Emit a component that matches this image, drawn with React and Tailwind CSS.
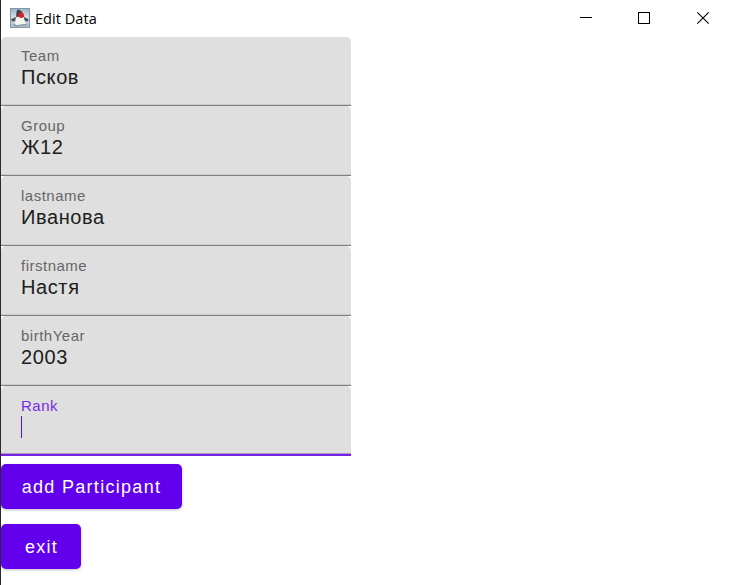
const fields = [
  { label: "Team", value: "Псков" },
  { label: "Group", value: "Ж12" },
  { label: "lastname", value: "Иванова" },
  { label: "firstname", value: "Настя" },
  { label: "birthYear", value: "2003" },
];

function DukeIcon() {
  return (
    <svg width="20" height="20" viewBox="0 0 20 20" className="block">
      <defs>
        <linearGradient id="sky" x1="0" y1="0" x2="0" y2="1">
          <stop offset="0" stopColor="#a3b4c4" />
          <stop offset="0.5" stopColor="#dbe3ea" />
          <stop offset="1" stopColor="#a9bccd" />
        </linearGradient>
      </defs>
      <rect width="20" height="20" fill="#8397aa" />
      <rect x="1" y="1" width="18" height="18" fill="url(#sky)" />
      <path d="M1 11 L6 9 L6 13 L2 13.500Z M14 9 L18.500 11 L18 13.500 L14 13Z" fill="#4d535c" />
      <path d="M8 2 C10 3 13 6 14 10 L15.500 16 L12 16.500 L8 17.500 L5 16 C5.500 12 6 6 8 2Z" fill="#f4f5f3" />
      <path d="M7.500 1.500 C10.500 2 13.500 4 14.200 9 L12 9.500 L8.500 8.500 L6.300 9.500 C6 6 6.500 3 7.500 1.500Z" fill="#3b4048" />
      <path d="M3 16.500 L7 18 L12 16.800 L17 17" stroke="#7b8791" fill="none" />
      <ellipse cx="11" cy="7.200" rx="2.600" ry="2.600" fill="#df1f1d" />
    </svg>
  );
}

function Field({ label, value, first }) {
  return (
    <div className={`${first ? "h-[69px] pt-[10px]" : "h-[70px] pt-[11px]"} w-[350px]`}>
      <div className="h-[18px] pl-5 text-[15px] leading-[18px] tracking-[0.5px] text-[#666]">{label}</div>
      <div className="h-6 pl-5 text-[20px] leading-6 tracking-[0.6px] text-[#202020]">{value}</div>
    </div>
  );
}

function FieldBox({ children }) {
  return (
    <div className="w-[350px] overflow-hidden border-b border-[#817f82]">
      <div className="-mb-px rounded-t-[5px] bg-[#dfdfdf] shadow-[inset_0_-2px_0_#c9c9c9]">{children}</div>
    </div>
  );
}

export default function App() {
  return (
    <div className="flex h-[585px] w-[732px] flex-col overflow-hidden border-l border-[#2b292c] bg-white font-['Liberation_Sans',sans-serif]">
      <header className="flex h-[37px] shrink-0 items-start text-black">
        <div className="ml-[9px] mt-2"><DukeIcon /></div>
        <span className="ml-[5px] mt-[9px] whitespace-nowrap font-['Open_Sans',sans-serif] text-[14.5px] leading-[20px] tracking-[0.05px]">Edit Data</span>
        <svg width="172" height="37" viewBox="0 0 172 37" className="ml-auto block" fill="none" stroke="black">
          <path d="M20 17.500H32" />
          <rect x="78.500" y="12.500" width="11" height="11" />
          <path d="M137.300 12.300L148.700 23.700M148.700 12.300L137.300 23.700" strokeWidth="1.100" />
        </svg>
      </header>
      <main className="flex flex-col items-start">
        {fields.map((f, i) => (
          <FieldBox key={f.label}>
            <Field label={f.label} value={f.value} first={i === 0} />
          </FieldBox>
        ))}
        <div className="h-[70px] w-[350px] rounded-t-[5px] bg-[#dfdfdf] pt-[11px] shadow-[inset_0_-2px_0_#7521e8,inset_0_-3px_0_#a99bb9]">
          <div className="h-[18px] pl-5 text-[15px] leading-[18px] tracking-[0.5px] text-[#7a2be2]">Rank</div>
          <div className="ml-5 mt-px h-[22px] w-px bg-[#5b10c8]" />
        </div>
        <button className="mt-2 h-[45px] w-[181px] whitespace-nowrap rounded-[5px] bg-[#6200ee] pt-[2px] text-[18px] tracking-[1.3px] text-white shadow-[0_1px_3px_rgba(0,0,0,0.25)]">add Participant</button>
        <button className="mt-[15px] h-[45px] w-20 rounded-[5px] bg-[#6200ee] pl-px pt-[2px] text-[18px] tracking-[1.3px] text-white shadow-[0_1px_3px_rgba(0,0,0,0.25)]">exit</button>
      </main>
    </div>
  );
}
